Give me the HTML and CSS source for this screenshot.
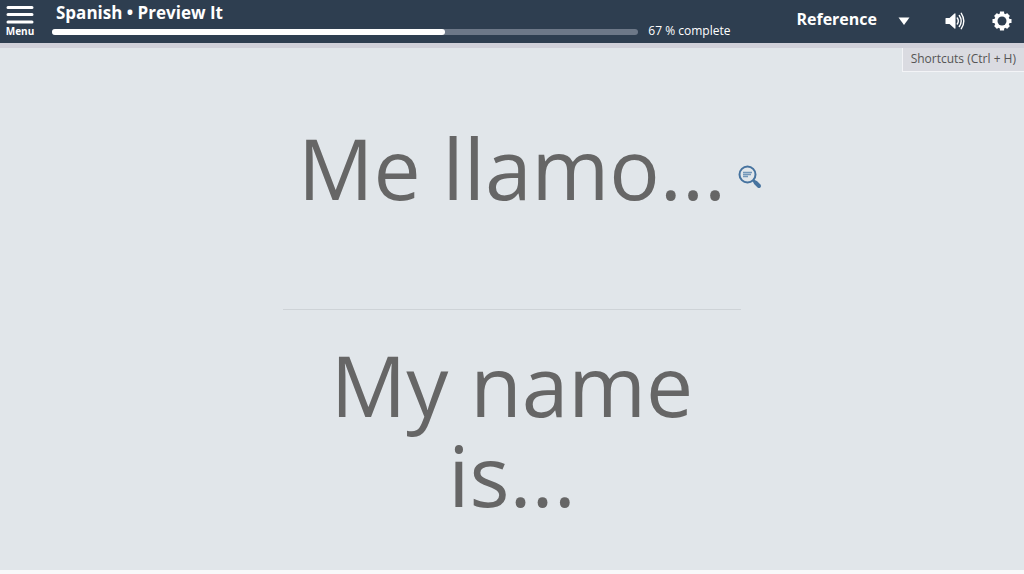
FILE: index.html
```html
<!DOCTYPE html>
<html lang="en">
<head>
  <meta charset="utf-8">
  <title>Spanish • Preview It</title>
  <link rel="stylesheet" href="styles.css">
</head>
<body>
  <header class="topbar">
    <button type="button" class="menu-button">
      <svg width="28" height="20" viewBox="0 0 28 20" stroke="#fff" stroke-width="3" stroke-linecap="round">
        <path d="M2 2.5h24M2 9.5h24M2 17h24"/>
      </svg>
      <span>Menu</span>
    </button>
    <div class="lesson">
      <h1 class="lesson-title">Spanish • Preview It</h1>
      <div class="progress-row">
        <div class="progress">
          <div class="progress-fill" style="width: 67%"></div>
        </div>
        <span class="progress-label">67 % complete</span>
      </div>
    </div>
    <div class="tools">
      <button type="button" class="reference-button">
        Reference
        <svg width="12" height="8" viewBox="0 0 12 8" fill="#fff"><path d="M0.5 0.5h11L6 8z"/></svg>
      </button>
      <button type="button" class="icon-button" aria-label="Sound">
        <svg width="20" height="20" viewBox="0 0 20 20" fill="none" stroke="#fff" stroke-width="1.4" stroke-linecap="round">
          <path d="M1 7h3.5l5-4.5q1-.6 1 .5v14q0 1.100-1 .5L4.500 13H1q-.5 0-.5-.5v-5q0-.5.5-.5z" fill="#fff" stroke="none"/>
          <path d="M12.300 7q2 3 0 6M14.300 4.500q3.800 5.500 0 11M16.300 2.300q5 7.700 0 15.400"/>
        </svg>
      </button>
      <button type="button" class="icon-button" aria-label="Settings">
        <svg width="20" height="20" viewBox="0 0 20 20">
          <g stroke="#fff" stroke-width="4.200">
            <path d="M10 .5v19M.5 10h19M3.500 3.500l13 13M16.500 3.500l-13 13"/>
          </g>
          <circle cx="10" cy="10" r="7.800" fill="#fff"/>
          <circle cx="10" cy="10" r="4.500" fill="#2e3e50"/>
        </svg>
      </button>
    </div>
  </header>
  <main class="stage">
    <button type="button" class="shortcuts">Shortcuts <span>(Ctrl + H)</span></button>
    <section class="phrase">
      <p class="phrase-text">Me llamo...</p>
      <button type="button" class="lookup" aria-label="Look up">
        <svg width="24" height="24" viewBox="0 0 24 24" fill="none" stroke="#46739f">
          <circle cx="9.500" cy="9.500" r="8" stroke-width="2"/>
          <path d="M5 7.500h9M5 9.500h8M5 11.500h5" stroke-width="1.300" stroke="#7397b9"/>
          <path d="M15 15l2 2" stroke-width="2.500"/>
          <path d="M17.500 17.500l3.500 3.500" stroke-width="4" stroke-linecap="round"/>
        </svg>
      </button>
    </section>
    <hr class="divider">
    <section class="phrase">
      <p class="phrase-text">My name is...</p>
    </section>
  </main>
</body>
</html>
```
FILE: styles.css
```css
* {
  box-sizing: border-box;
}
body {
  margin: 0;
  min-height: 100vh;
  display: flex;
  flex-direction: column;
  padding-bottom: 4px;
  background-color: #f8f9fa;
  font-family: "Open Sans", "Noto Sans", sans-serif;
  color: #666;
}
button {
  margin: 0;
  padding: 0;
  border: none;
  background: none;
  font-family: inherit;
  color: inherit;
  cursor: pointer;
}
svg {
  display: block;
}
.topbar {
  display: flex;
  height: 48px;
  background-color: #2e3e50;
  border-bottom: 5px solid #d0d0d9;
  color: #fff;
}
.menu-button {
  display: flex;
  flex-direction: column;
  align-items: center;
  width: 40px;
  padding-top: 5px;
  font-size: 10px;
  font-weight: bold;
  line-height: 12px;
}
.lesson {
  flex: 1;
  padding-left: 12px;
}
.lesson-title {
  margin: 0;
  padding: 2px 4px 0;
  font-size: 17px;
  line-height: 22px;
}
.progress-row {
  display: flex;
  align-items: center;
  gap: 10px;
  height: 16px;
}
.progress {
  flex: 1;
  height: 6px;
  border-radius: 3px;
  background-color: #6d7888;
}
.progress-fill {
  height: 100%;
  border-radius: 3px;
  background-color: #fff;
}
.progress-label {
  padding-bottom: 2px;
  font-size: 12px;
  line-height: 14px;
}
.tools {
  display: flex;
  align-items: center;
  gap: 27px;
  padding: 0 12px 2px 66px;
}
.reference-button {
  display: flex;
  align-items: center;
  gap: 21px;
  padding: 0 8px 4px 0;
  font-size: 16px;
  font-weight: bold;
  line-height: 20px;
}
.reference-button svg {
  margin-top: 4px;
}
.stage {
  position: relative;
  flex: 1;
  display: flex;
  flex-direction: column;
  background-color: #e1e6ea;
}
.shortcuts {
  position: absolute;
  top: 0;
  right: 0;
  padding: 0 8px 2px;
  border: solid #f3f4f7;
  border-width: 0 0 1px 1px;
  background-color: #dadbe1;
  color: #555;
  font-size: 12px;
  line-height: 21px;
}
.phrase {
  flex: 1 1 0px;
  display: grid;
  grid-template-columns: 1fr minmax(auto, 452px) 1fr;
  align-items: center;
  padding-bottom: 20px;
}
.phrase-text {
  grid-column: 2;
  margin: 0;
  font-size: 84px;
  line-height: 90px;
  text-align: center;
}
.lookup {
  justify-self: start;
  padding-top: 18px;
}
.divider {
  width: 458px;
  margin: 0 auto;
  border: none;
  border-top: 1px solid #ced3d7;
}
```
